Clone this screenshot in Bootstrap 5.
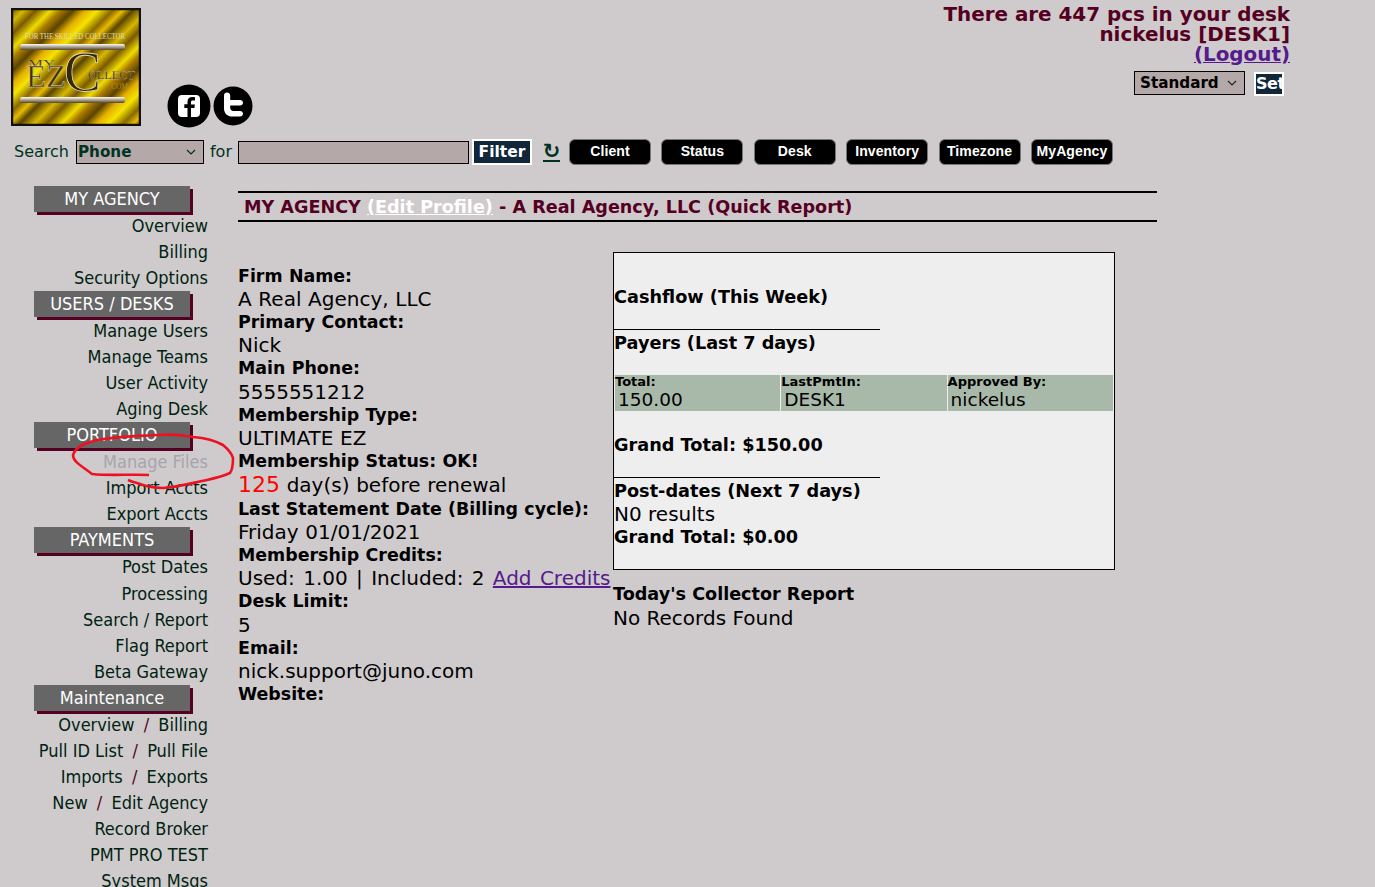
<!DOCTYPE html>
<html lang="en">
<head>
<meta charset="utf-8">
<title>MyEZCollect</title>
<link href="https://cdn.jsdelivr.net/npm/bootstrap@5.3.0/dist/css/bootstrap.min.css" rel="stylesheet">
<style>
body{background:#cfcbcc;font-family:"DejaVu Sans",Verdana,sans-serif;color:#000;height:887px;overflow:hidden;position:relative}
a{color:#551a8b}
.top-row{height:130px;padding:8px 85px 0 11px}
.logo-box{width:130px;height:118px;display:block}
.social{margin:76px 0 0 26px;gap:2px}
.desk-info{color:#550022;font-weight:700;font-size:19.9px;line-height:20px;text-align:right;margin-top:-3px}
.desk-info a{color:#551a8b}
.style-row{margin-top:6px;gap:9px;padding-right:6px;align-items:flex-start}
.sel-mini{appearance:none;background-color:#b5a8a8;border:1px solid #000;font-family:inherit;font-weight:700;font-size:15.2px;line-height:20px;height:24px;border-radius:0;position:relative}
.sel-wrap{position:relative;display:inline-block}
.sel-wrap svg{position:absolute;right:8px;top:9px;pointer-events:none}
.w-std{width:111px;color:#000;padding:0 0 0 5px}
.w-phone{width:128px;color:#003322;padding:0 0 0 1px}
.set-btn{background:#12263a;color:#fff;border:2px solid #fff;font-weight:700;font-size:16px;line-height:20px;width:30px;height:24px;padding:0;border-radius:0;overflow:hidden;letter-spacing:-.5px;font-family:inherit;text-align:left;margin-top:1px}
.search-row{height:28px;padding-left:14px;margin-top:8px;color:#003322;font-size:16px;align-items:center}
.search-input{width:231px;height:23px;background:#b5a8a8;border:1px solid #000;margin:0 3px 0 6px;padding:0}
.filter-btn{background:#12263a;color:#fff;border:2px solid #fff;font-weight:700;font-size:15.5px;width:60px;height:26px;padding:0;border-radius:0;font-family:inherit;line-height:20px;margin-right:11px}
.reload{color:#003322;font-size:21px;font-weight:700;line-height:16px;border-bottom:2px solid #003322;width:17px;margin-right:9px;height:19px;display:flex;justify-content:center}
.pill{background:#000;color:#fff;border:1px solid #777;border-radius:6px;font-size:14px;font-weight:700;width:82px;height:26px;padding:0 0 2px;margin-right:10.4px;font-family:"Liberation Sans",sans-serif;line-height:21px;letter-spacing:.1px;white-space:nowrap}
.main-row{padding-top:20px;align-items:flex-start}
.side-col{width:208px;padding-left:34px;flex:none}
.sec-head{background:#666;color:#fff;width:156px;height:26px;line-height:25px;margin-bottom:1px;text-align:center;box-shadow:3px 3px 0 #550022;font-size:18px;font-family:"DejaVu Sans Condensed","DejaVu Sans",sans-serif}
.side-item{display:block;text-align:right;line-height:26px;height:26.05px;color:#002211;font-size:18px;white-space:nowrap;text-decoration:none;font-family:"DejaVu Sans Condensed","DejaVu Sans",sans-serif}
.side-item i{font-style:normal;color:#550022;margin:0 4px}
.side-item.off{color:#a8a4ac}
.content-col{margin-left:30px;width:919px;flex:none;padding-top:5px}
.title-bar{border-top:2px solid #000;border-bottom:2px solid #000;height:31px;line-height:29px;padding-left:6px;color:#550022;font-weight:700;font-size:17.6px;white-space:nowrap}
.title-bar a{color:#fff}
.columns{padding-top:30px}
.left-info{width:375px;flex:none;padding-top:12.5px;font-size:20px;line-height:23.2px;white-space:nowrap;word-spacing:.3px}
.left-info b{font-size:17.4px;display:block}
.left-info .red{color:#f00;font-size:22px}
.wide-line{word-spacing:2px}
.right-info{width:502px;flex:none;font-size:20px;line-height:25px}
.report-box{background:#eee;border:1px solid #000;height:318px;padding:33px 0 0;line-height:23px;position:relative}
.report-box b{font-size:17.7px;display:block}
.rule{width:266px;border-bottom:1px solid #000;height:21px}
.pay-grid{display:flex;gap:1px;margin:20px 0 0 1px;width:498px}
.pay-cell{background:#a9b9a9;width:165.3px;height:36px;line-height:19px;font-size:18.5px}
.pay-cell small{display:block;font-size:13px;font-weight:700;line-height:13px}
.pay-cell span{padding-left:3px;display:block;margin-top:2px}
.head-gap{margin-top:2px}
.total-gap{margin-top:23px}
.after-box{margin-top:12px}
.after-box b{font-size:17.6px;display:block;line-height:24px}
.scribble{position:absolute;left:70px;top:430px;pointer-events:none}
</style>
</head>
<body>
<div class="d-flex justify-content-between top-row">
  <div class="d-flex align-items-start">
    <svg class="logo-box" viewBox="0 0 130 118" aria-label="MyEZCollect logo">
      <defs>
        <linearGradient id="gold" gradientUnits="userSpaceOnUse" x1="0" y1="0" x2="62" y2="62" spreadMethod="repeat">
          <stop offset="0" stop-color="#5a4500"/><stop offset=".12" stop-color="#d8b800"/><stop offset=".22" stop-color="#7a5a00"/><stop offset=".34" stop-color="#f0dc00"/><stop offset=".42" stop-color="#a87a00"/><stop offset=".52" stop-color="#5a4200"/><stop offset=".62" stop-color="#e4b000"/><stop offset=".72" stop-color="#f5e400"/><stop offset=".84" stop-color="#8a6800"/><stop offset=".92" stop-color="#e8bc00"/><stop offset="1" stop-color="#5a4500"/>
        </linearGradient>
        <linearGradient id="bar" x1="0" y1="0" x2="0" y2="1"><stop offset="0" stop-color="#fff"/><stop offset="1" stop-color="#554422"/></linearGradient>
      </defs>
      <rect x="1" y="1" width="128" height="116" fill="url(#gold)" stroke="#111" stroke-width="2.5"/>
      <text x="14" y="31" textLength="100" lengthAdjust="spacingAndGlyphs" font-family="Liberation Serif" font-size="7.5" fill="#e0d8bc">FOR THE SKILLED COLLECTOR</text>
      <rect x="9" y="36" width="105" height="6" rx="2" fill="url(#bar)"/>
      <rect x="9" y="89" width="105" height="6" rx="2" fill="url(#bar)"/>
      <text x="17" y="59" textLength="27" lengthAdjust="spacingAndGlyphs" font-family="Liberation Serif" font-size="10" fill="#2a2210" stroke="#ddd0a0" stroke-width=".2">MY</text>
      <text x="15" y="79" textLength="40" lengthAdjust="spacingAndGlyphs" font-family="Liberation Serif" font-size="32" fill="#3a3010" stroke="#e4d8a8" stroke-width=".5">EZ</text>
      <text x="53" y="83" textLength="37" lengthAdjust="spacingAndGlyphs" font-family="Liberation Serif" font-size="56" fill="#33280a" stroke="#e8dcac" stroke-width=".8">C</text>
      <text x="77" y="71" textLength="47" lengthAdjust="spacingAndGlyphs" font-family="Liberation Serif" font-size="13" fill="#2a2210" stroke="#d8cca0" stroke-width=".25">OLLECT</text>
      <text x="98" y="81" textLength="19" lengthAdjust="spacingAndGlyphs" font-family="Liberation Serif" font-size="7.5" fill="#b88a20">.COM</text>
    </svg>
    <div class="d-flex social">
      <svg width="44" height="44" viewBox="0 0 44 44" aria-label="Facebook"><circle cx="22" cy="22" r="21.5" fill="#000"/><rect x="11" y="11" width="22" height="22" rx="4" fill="#fff"/><path d="M24 33v-9h3.400l.5-3.600H24v-2.200c0-1 .4-1.700 1.800-1.700H28v-3.200c-.5 0-1.600-.2-2.900-.2-2.800 0-4.600 1.700-4.600 4.700v2.400h-3.200V24h3.200v9z" fill="#000"/></svg>
      <svg width="40" height="40" viewBox="0 0 40 40" style="margin-top:2px" aria-label="Twitter"><circle cx="20" cy="20" r="19.5" fill="#000"/><path d="M11 9.500c0-1.700 1.300-3 3-3s3.200 1.300 3.200 3V14H27c1.800 0 3 1.200 3 2.800s-1.200 2.800-3 2.800h-9.800v2c0 2.400 1.300 3.400 3.300 3.400H27c1.800 0 3 1.200 3 2.800S28.800 30.600 27 30.600h-7.500C14.500 30.600 11 27.500 11 22.500z" fill="#fff"/></svg>
    </div>
  </div>
  <div class="desk-info">
    <div>There are 447 pcs in your desk</div>
    <div>nickelus [DESK1]</div>
    <div><a href="#">(Logout)</a></div>
    <div class="d-flex justify-content-end style-row">
      <span class="sel-wrap"><select class="sel-mini w-std"><option>Standard</option></select><svg width="10" height="6" viewBox="0 0 10 6"><path d="M1 1l4 4 4-4" fill="none" stroke="#222" stroke-width="1.200"/></svg></span>
      <button class="set-btn" type="button">Set</button>
    </div>
  </div>
</div>

<div class="d-flex search-row">
  <span style="margin-right:7px">Search</span>
  <span class="sel-wrap"><select class="sel-mini w-phone"><option>Phone</option></select><svg width="10" height="6" viewBox="0 0 10 6"><path d="M1 1l4 4 4-4" fill="none" stroke="#003322" stroke-width="1.200"/></svg></span>
  <span style="margin-left:6px">for</span>
  <input class="search-input" type="text" aria-label="Search value">
  <button class="filter-btn" type="button">Filter</button>
  <span class="reload">↻</span>
  <button class="pill" type="button">Client</button>
  <button class="pill" type="button">Status</button>
  <button class="pill" type="button">Desk</button>
  <button class="pill" type="button">Inventory</button>
  <button class="pill" type="button">Timezone</button>
  <button class="pill" type="button">MyAgency</button>
</div>

<div class="d-flex main-row">
  <nav class="side-col">
    <div class="sec-head">MY AGENCY</div>
    <a class="side-item" href="#">Overview</a>
    <a class="side-item" href="#">Billing</a>
    <a class="side-item" href="#">Security Options</a>
    <div class="sec-head">USERS / DESKS</div>
    <a class="side-item" href="#">Manage Users</a>
    <a class="side-item" href="#">Manage Teams</a>
    <a class="side-item" href="#">User Activity</a>
    <a class="side-item" href="#">Aging Desk</a>
    <div class="sec-head">PORTFOLIO</div>
    <a class="side-item off" href="#">Manage Files</a>
    <a class="side-item" href="#">Import Accts</a>
    <a class="side-item" href="#">Export Accts</a>
    <div class="sec-head">PAYMENTS</div>
    <a class="side-item" href="#">Post Dates</a>
    <a class="side-item" href="#">Processing</a>
    <a class="side-item" href="#">Search / Report</a>
    <a class="side-item" href="#">Flag Report</a>
    <a class="side-item" href="#">Beta Gateway</a>
    <div class="sec-head">Maintenance</div>
    <a class="side-item" href="#">Overview <i>/</i> Billing</a>
    <a class="side-item" href="#">Pull ID List <i>/</i> Pull File</a>
    <a class="side-item" href="#">Imports <i>/</i> Exports</a>
    <a class="side-item" href="#">New <i>/</i> Edit Agency</a>
    <a class="side-item" href="#">Record Broker</a>
    <a class="side-item" href="#">PMT PRO TEST</a>
    <a class="side-item" href="#">System Msgs</a>
  </nav>
  <main class="content-col">
    <div class="title-bar">MY AGENCY <a href="#">(Edit Profile)</a> - A Real Agency, LLC (Quick Report)</div>
    <div class="d-flex columns">
      <div class="left-info">
        <b>Firm Name:</b>A Real Agency, LLC
        <b>Primary Contact:</b>Nick
        <b>Main Phone:</b>5555551212
        <b>Membership Type:</b>ULTIMATE EZ
        <b>Membership Status: OK!</b><span class="red">125</span> day(s) before renewal
        <b>Last Statement Date (Billing cycle):</b>Friday 01/01/2021
        <b>Membership Credits:</b><span class="wide-line">Used: 1.00 | Included: 2 <a href="#">Add Credits</a></span>
        <b>Desk Limit:</b>5
        <b>Email:</b>nick.support@juno.com
        <b>Website:</b>
      </div>
      <div class="right-info">
        <div class="report-box">
          <b>Cashflow (This Week)</b>
          <div class="rule"></div>
          <b class="head-gap">Payers (Last 7 days)</b>
          <div class="pay-grid">
            <div class="pay-cell"><small>Total:</small><span>150.00</span></div>
            <div class="pay-cell"><small>LastPmtIn:</small><span>DESK1</span></div>
            <div class="pay-cell"><small>Approved By:</small><span>nickelus</span></div>
          </div>
          <b class="total-gap">Grand Total: $150.00</b>
          <div class="rule"></div>
          <b class="head-gap">Post-dates (Next 7 days)</b>
          N0 results
          <b>Grand Total: $0.00</b>
        </div>
        <div class="after-box"><b>Today's Collector Report</b>No Records Found</div>
      </div>
    </div>
  </main>
</div>

<svg class="scribble" width="170" height="65" viewBox="0 0 170 65" aria-hidden="true">
  <path d="M79 45 C60 44 40 46 22 44 C12 36 3 32 3 25 C6 16 16 13 27 10 C50 6 70 6 87 5 C100 4 112 5 123 7 C135 8 146 11 153 15 C159 20 162 24 163 28 C163 34 163 39 160 43 C153 46 146 48 137 50 C122 53 108 57 93 58 C82 58 72 55 67 53 C63 52 60 51 58 50" fill="none" stroke="#ee1122" stroke-width="2.600"/>
</svg>
</body>
</html>
